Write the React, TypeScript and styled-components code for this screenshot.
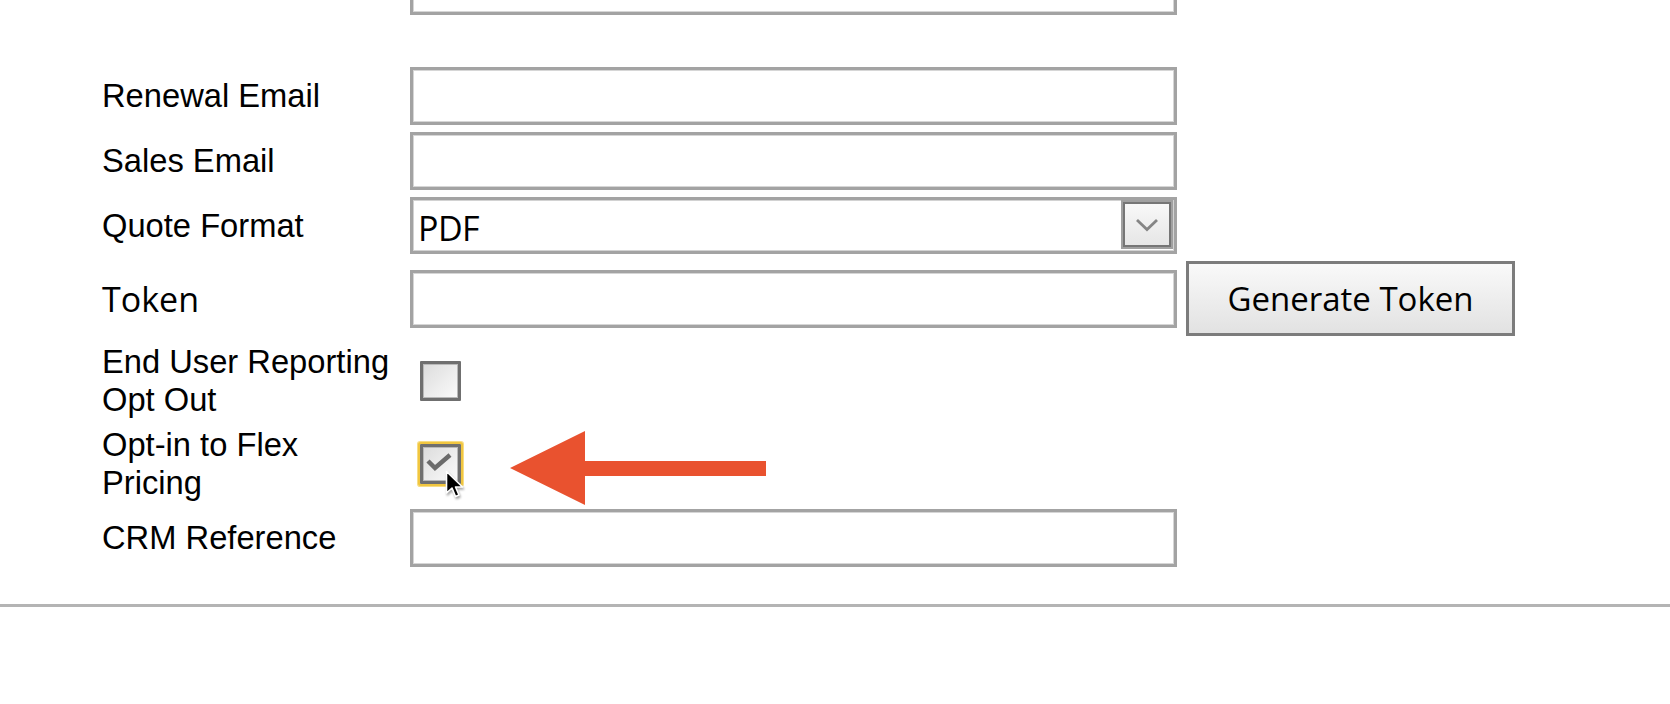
import styled, { createGlobalStyle } from "styled-components";

const GlobalStyle = createGlobalStyle`
  html, body {
    margin: 0;
    padding: 0;
    background: #ffffff;
  }

  body {
    font-family: "Liberation Sans", Arial, sans-serif;
    color: #000;
    overflow: hidden;
  }
`;

const App = () => {
  return (
    <Page>
      <GlobalStyle />
      <Form>
        <Label />
        <TextInput />
        <Extra />

        <Spacer />

        <Label>Renewal Email</Label>
        <TextInput />
        <Extra />

        <Label>Sales Email</Label>
        <TextInput />
        <Extra />

        <Label>Quote Format</Label>
        <Select>
          <SelectValue>PDF</SelectValue>
          <DropButton>
            <svg width="24" height="14" viewBox="0 0 24 14">
              <polyline
                points="2,2 12,11.5 22,2"
                fill="none"
                stroke="#858585"
                strokeWidth="2.8"
              />
            </svg>
          </DropButton>
        </Select>
        <Extra />

        <Label $alt>Token</Label>
        <TextInput />
        <Extra>
          <Button>Generate Token</Button>
        </Extra>

        <Label>End User Reporting Opt Out</Label>
        <Field>
          <Checkbox />
        </Field>
        <Extra />

        <Label>Opt-in to Flex Pricing</Label>
        <Field>
          <Checkbox $checked>
            <svg width="35" height="34" viewBox="0 0 35 34">
              <polyline
                points="5,14 12,21 27,8"
                fill="none"
                stroke="#6b6b6b"
                strokeWidth="4.5"
              />
            </svg>
            <Cursor>
              <svg width="19" height="29" viewBox="0 0 19 29">
                <path
                  d="M1.5 1.5 L1.5 23 L7 18 L10.5 26.5 L14 25 L10.5 17 L17.5 17 Z"
                  fill="#000"
                  stroke="#fff"
                  strokeWidth="1.6"
                  strokeLinejoin="round"
                />
              </svg>
            </Cursor>
          </Checkbox>
          <Pointer>
            <svg width="256" height="74" viewBox="0 0 256 74">
              <polygon
                points="0,37 75,0 75,30 256,30 256,45 75,45 75,74"
                fill="#e9522f"
              />
            </svg>
          </Pointer>
        </Field>
        <Extra />

        <Label>CRM Reference</Label>
        <TextInput />
        <Extra />
      </Form>
      <Rule />
    </Page>
  );
};

export default App;

const Page = styled.div`
  width: 1670px;
  height: 704px;
  overflow: hidden;
`;

const Form = styled.div`
  display: grid;
  grid-template-columns: 308px 767px auto;
  row-gap: 7px;
  align-items: center;
  justify-items: start;

  padding-left: 102px;
  margin-top: -43px;
`;

const Label = styled.div<{ $alt?: boolean }>`
  width: 298px;

  font-family: ${(p) =>
    p.$alt
      ? '"Open Sans", "Noto Sans", sans-serif'
      : '"Liberation Sans", Arial, sans-serif'};
  font-size: ${(p) => (p.$alt ? "34px" : "32.7px")};
  line-height: 38px;
  color: #000;
`;

const Spacer = styled.div`
  grid-column: 1 / -1;
  height: 38px;
`;

const Extra = styled.div`
  display: flex;
  align-items: center;
`;

const TextInput = styled.input`
  box-sizing: border-box;
  width: 767px;
  height: 58px;
  padding: 0 10px;

  border: 3px solid #a3a3a3;
  box-shadow: inset 0 0 0 1px #d6d6d6;
  background: #fff;
  outline: none;

  font-family: "Open Sans", sans-serif;
  font-size: 30px;
`;

const Select = styled.div`
  display: flex;
  align-items: stretch;
  justify-content: space-between;

  box-sizing: border-box;
  width: 767px;
  height: 57px;
  padding: 2px 3px 4px 5px;

  border: 3px solid #a3a3a3;
  box-shadow: inset 0 0 0 1px #d2d2d2;
  background: #fff;
`;

const SelectValue = styled.div`
  margin-top: 4px;

  font-family: "Open Sans", "Noto Sans", sans-serif;
  font-size: 34px;
  line-height: 44px;
  letter-spacing: -0.5px;
  color: #000;
`;

const DropButton = styled.div`
  display: flex;
  align-items: center;
  justify-content: center;

  box-sizing: border-box;
  width: 48px;

  border: 2px solid #767676;
  box-shadow: 0 0 0 2px #a0a0a0;
  background: linear-gradient(to bottom, #f8f8f8, #e6e6e6);
`;

const Button = styled.div`
  display: flex;
  align-items: center;
  justify-content: center;

  box-sizing: border-box;
  width: 329px;
  height: 75px;
  margin-left: 9px;

  border: 3px solid #7c7c7c;
  background: linear-gradient(to bottom, #f9f9f9, #e2e2e2);

  font-family: "Open Sans", "Noto Sans", sans-serif;
  font-size: 33px;
  color: #000;
  cursor: default;
`;

const Field = styled.div`
  position: relative;
  display: flex;
  align-items: center;
  width: 767px;
`;

const Checkbox = styled.div<{ $checked?: boolean }>`
  position: relative;
  display: flex;
  align-items: center;
  justify-content: center;

  box-sizing: border-box;
  width: 41px;
  height: 40px;
  margin-left: 10px;

  border: 3px solid #6f6f6f;
  border-radius: 1px;
  background: linear-gradient(135deg, #dcdcdc, #fbfbfb);
  box-shadow: inset 0 0 0 1px #b9b9b9
    ${(p) => (p.$checked ? ", 0 0 0 2px #f1c640, 0 0 0 3px #f7dd85" : "")};
`;

const Cursor = styled.div`
  position: absolute;
  left: 22px;
  top: 23px;
  width: 19px;
  height: 29px;
  filter: drop-shadow(1px 2px 1px rgba(0, 0, 0, 0.35));
`;

const Pointer = styled.div`
  position: absolute;
  left: 100px;
  top: -13px;
  width: 256px;
  height: 74px;
`;

const Rule = styled.div`
  height: 3px;
  margin-top: 37px;
  background: #b4b4b4;
`;
